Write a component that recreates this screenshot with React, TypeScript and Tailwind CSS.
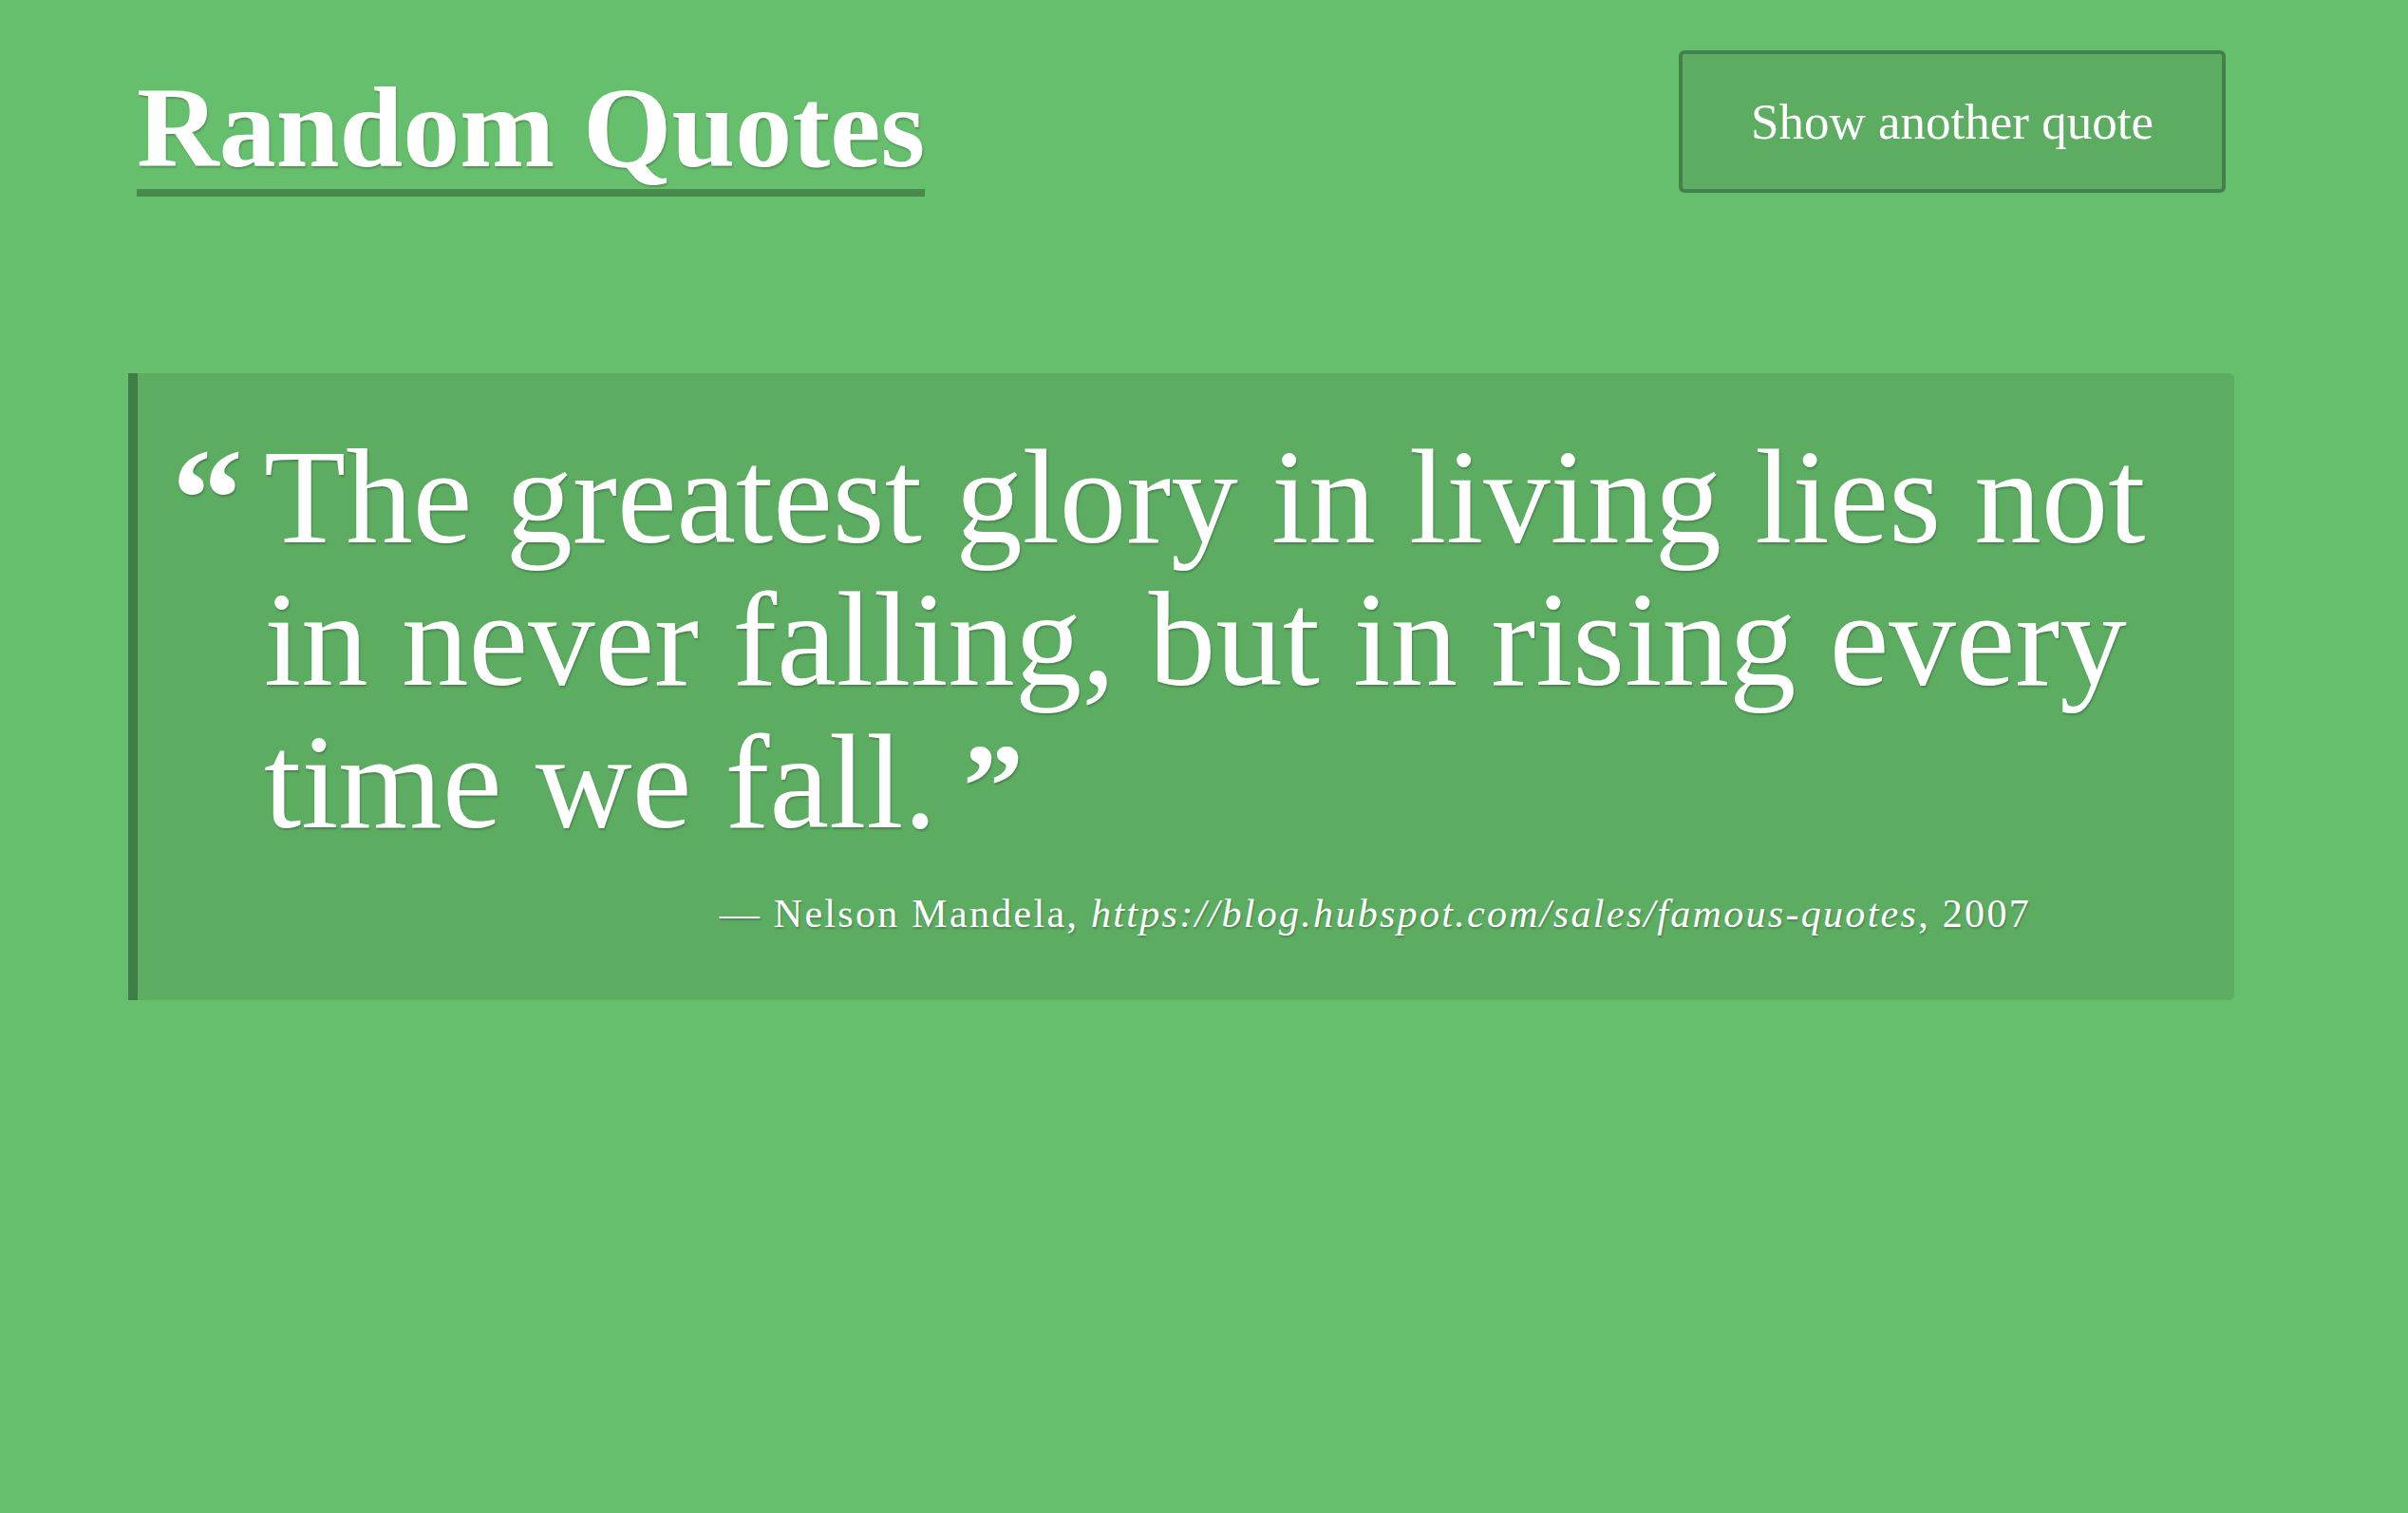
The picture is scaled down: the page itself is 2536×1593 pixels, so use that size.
import React from "react";

const serif = { fontFamily: '"Liberation Serif", "DejaVu Serif", serif' };

export default function App() {
  return (
    <div
      className="min-h-screen w-full bg-[#66bf6c] text-white [text-shadow:1px_2px_2px_rgba(0,0,0,0.22)]"
      style={serif}
    >
      <div className="ml-[135px] w-[2218px] pt-[53px]">
        <header className="flex items-start justify-between">
          <h1 className="ml-[9px] mt-[22px] inline-block border-b-[8px] border-[#468a4c] pb-[4px] text-[120px] font-bold leading-none">
            Random Quotes
          </h1>
          <button className="mr-[9px] flex h-[150px] w-[576px] items-center justify-center rounded-[6px] border-4 border-[#448149] bg-[#5cac62] text-[53px] leading-none text-white">
            Show another quote
          </button>
        </header>

        <section className="mt-[186px] rounded-r-[6px] border-l-[10px] border-[#3f7d46] bg-[#5cac62] pb-[59px] pl-[36px] pr-[60px] pt-[55px]">
          <div className="flex items-start">
            <span className="mt-[27px] w-[97px] shrink-0 text-[150px] font-bold leading-[100px]">
              “
            </span>
            <p className="text-[141px] leading-[150px]">
              The greatest glory in living lies not in never falling, but in
              rising every time we fall.{" "}
              <span className="ml-[-8px] inline-block h-[80px] align-baseline text-[128px] font-bold leading-[80px]">”</span>
            </p>
          </div>
          <p className="mt-[33px] pr-[154px] text-right text-[42px] leading-[63px] tracking-[2.3px]">
            — Nelson Mandela,{" "}
            <cite className="italic">https://blog.hubspot.com/sales/famous-quotes</cite>
            , 2007
          </p>
        </section>
      </div>
    </div>
  );
}
